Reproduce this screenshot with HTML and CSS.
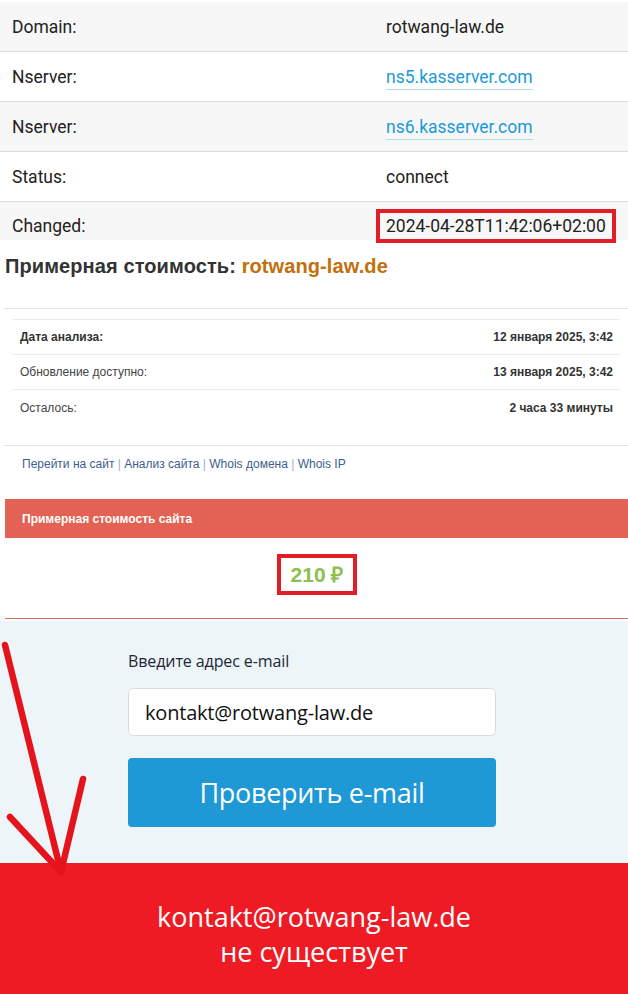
FILE: index.html
```html
<!DOCTYPE html>
<html lang="ru">
<head>
<meta charset="utf-8">
<title>rotwang-law.de</title>
<link rel="stylesheet" href="styles.css">
</head>
<body>
<div class="page">
  <div class="whois">
    <div class="wrow odd"><div class="wlabel">Domain:</div><div class="wvalue">rotwang-law.de</div></div>
    <div class="wrow"><div class="wlabel">Nserver:</div><div class="wvalue"><a class="ns" href="#">ns5.kasserver.com</a></div></div>
    <div class="wrow odd"><div class="wlabel">Nserver:</div><div class="wvalue"><a class="ns" href="#">ns6.kasserver.com</a></div></div>
    <div class="wrow"><div class="wlabel">Status:</div><div class="wvalue">connect</div></div>
    <div class="wrow odd last"><div class="wlabel">Changed:</div><div class="wvalue"><span class="mark">2024-04-28T11:42:06+02:00</span></div></div>
  </div>

  <div class="cost">
    <h2 class="cost-title">Примерная стоимость: <span class="dom">rotwang-law.de</span></h2>
    <div class="rule"></div>
    <div class="info">
      <div class="irow"><span class="ilabel bold">Дата анализа:</span><span class="ivalue">12 января 2025, 3:42</span></div>
      <div class="irow"><span class="ilabel">Обновление доступно:</span><span class="ivalue">13 января 2025, 3:42</span></div>
      <div class="irow noline"><span class="ilabel">Осталось:</span><span class="ivalue">2 часа 33 минуты</span></div>
    </div>
    <div class="rule"></div>
    <div class="links"><a href="#">Перейти на сайт</a> <span class="sep">|</span> <a href="#">Анализ сайта</a> <span class="sep">|</span> <a href="#">Whois домена</a> <span class="sep">|</span> <a href="#">Whois IP</a></div>
    <div class="bar">Примерная стоимость сайта</div>
    <div class="price-wrap"><span class="price">210 ₽</span></div>
    <div class="rule salmon"></div>
  </div>

  <div class="form">
    <div class="form-inner">
      <div class="flabel">Введите адрес e-mail</div>
      <div class="finput">kontakt@rotwang-law.de</div>
      <div class="fbutton">Проверить e-mail</div>
    </div>
  </div>

  <div class="result">
    <div>kontakt@rotwang-law.de</div>
    <div>не существует</div>
  </div>

  <svg class="arrow" width="100" height="250" viewBox="0 640 100 250" aria-hidden="true">
    <g stroke="#e5141c" stroke-width="6.5" stroke-linecap="round" fill="none">
      <line x1="5" y1="645" x2="61" y2="872"/>
      <line x1="10" y1="817" x2="61" y2="872"/>
      <line x1="83" y1="779" x2="61" y2="872"/>
    </g>
  </svg>
</div>
</body>
</html>
```
FILE: styles.css
```css
* { box-sizing: border-box; }
html, body { margin: 0; padding: 0; background: #fff; }
.page { position: relative; width: 628px; height: 994px; overflow: hidden; }

/* whois table */
.whois { padding-top: 2px; font-family: Roboto, "Liberation Sans", sans-serif; font-size: 17.5px; color: #222; }
.wrow { display: flex; align-items: center; height: 50px; border-bottom: 1px solid #dcdcdc; }
.wrow.odd { background: #f7f7f7; }
.wrow.last { height: 38px; border-bottom: none; align-items: flex-start; padding-top: 7px; }
.wrow.last .wlabel { padding-top: 7px; line-height: 20px; }
.wlabel { width: 386px; padding-left: 12px; }
.wvalue { flex: 1; }
.ns { color: #1a9ad6; text-decoration: none; border-bottom: 1px solid #b3ddf1; padding-bottom: 2px; }
.mark { display: inline-block; margin-left: -10px; border: 4px solid #e31d25; padding: 3px 6px; line-height: 20px; position: relative; z-index: 1; }

/* cost section */
.cost { font-family: "Liberation Sans", Arial, sans-serif; }
.cost-title { margin: 14px 0 0 5px; font-size: 20px; line-height: 24px; font-weight: bold; color: #333; letter-spacing: 0.1px; }
.dom { color: #c0700c; }
.rule { margin: 30px 0 0 4px; border-top: 1px solid #e2e2e2; }
.info { margin: 10px 8px 0 13px; border-top: 1px solid #eaeaea; font-size: 12px; color: #444; }
.irow { display: flex; justify-content: space-between; align-items: center; height: 35px; padding: 0 7px; border-bottom: 1px solid #eaeaea; }
.irow.noline { border-bottom: none; height: 36px; }
.ilabel.bold { font-weight: bold; color: #333; }
.ivalue { font-weight: bold; color: #333; }
.info + .rule { margin-top: 19px; }
.links { margin: 10px 0 0 22px; font-size: 12px; line-height: 16px; }
.links a { color: #3b5e8f; text-decoration: none; }
.links .sep { color: #8fb3d4; }
.bar { margin: 27px 0 0 5px; height: 39px; background: #e36253; color: #fff; font-size: 12px; font-weight: bold; padding-left: 17px; display: flex; align-items: center; }
.price-wrap { display: flex; justify-content: center; padding: 16px 0 0 5px; }
.price { display: inline-block; border: 4px solid #e31d25; padding: 5px 10px; font-size: 21px; line-height: 23px; font-weight: bold; color: #8cc04f; margin-left: 1px; }
.rule.salmon { margin-top: 23px; border-top: 1px solid #cf7465; margin-left: 5px; }

/* form */
.form { margin-top: 2px; background: #eef5f9; height: 242px; padding-left: 128px; padding-top: 30px; font-family: "Open Sans", "Noto Sans", sans-serif; }
.form-inner { width: 368px; }
.flabel { font-size: 16px; line-height: 20px; color: #1b2733; letter-spacing: -0.1px; }
.finput { margin-top: 17px; height: 48px; background: #fff; border: 1px solid #d9dde0; border-radius: 5px; padding-left: 16px; display: flex; align-items: center; font-size: 20px; color: #111; letter-spacing: -0.2px; }
.fbutton { margin-top: 22px; height: 69px; background: #1f98d6; border-radius: 4px; color: #fff; font-size: 27px; display: flex; align-items: center; justify-content: center; letter-spacing: -0.3px; }

/* result */
.result { background: #ee1b24; height: 132px; color: #fff; font-family: "Open Sans", "Noto Sans", sans-serif; font-size: 27px; line-height: 35px; text-align: center; padding-top: 36px; letter-spacing: 0; }

.arrow { position: absolute; left: 0; top: 640px; }
```
